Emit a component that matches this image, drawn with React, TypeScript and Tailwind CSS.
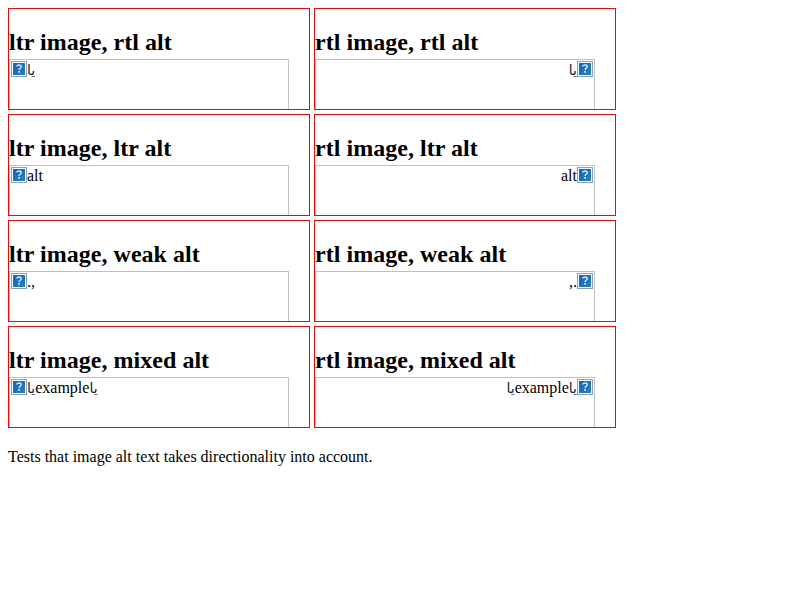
import React from "react";

type Dir = "ltr" | "rtl";

function BrokenIcon() {
  return (
    <svg width="16" height="16" viewBox="0 0 16 16" className="block shrink-0">
      <defs>
        <linearGradient id="blue" x1="0" y1="0" x2="1" y2="1">
          <stop offset="0" stopColor="#1a64a8" />
          <stop offset="1" stopColor="#2480c8" />
        </linearGradient>
      </defs>
      <rect x="0.5" y="0.5" width="15" height="15" fill="#fff" stroke="#7ba3d0" />
      <rect x="2" y="2" width="12" height="12" fill="url(#blue)" />
      <path d="M5.8 5.6C5.8 3.5 10.2 3.5 10.2 5.7C10.2 7.3 8.1 7.3 8.1 9" fill="none" stroke="#dcebf7" strokeWidth="1.4" />
      <rect x="7.2" y="10" width="1.8" height="1.7" fill="#dcebf7" />
    </svg>
  );
}

function AltText({ text }: { text: string }) {
  return (
    <span className="h-[18px] leading-[18px] whitespace-nowrap">
      {text.split(/([\u0600-\u06ff]+)/).map((part, i) =>
        /[\u0600-\u06ff]/.test(part) ? (
          <span key={i} className="text-sm leading-none text-[#222]">{part}</span>
        ) : (
          part
        ),
      )}
    </span>
  );
}

function Cell({ dir, kind, alt }: { dir: Dir; kind: string; alt: string }) {
  return (
    <div className="h-[102px] w-[302px] overflow-hidden border border-[#ff0000]">
      <h2 className="mt-5 h-[30px] text-2xl leading-[27px] font-bold tracking-[0.03px] whitespace-nowrap">
        {dir} image, {kind} alt
      </h2>
      <div dir={dir} className="flex h-[100px] w-[280px] border border-[#c0c0c0] p-px">
        <BrokenIcon />
        <AltText text={alt} />
      </div>
    </div>
  );
}

const rows = [
  { kind: "rtl", alt: "يا" },
  { kind: "ltr", alt: "alt" },
  { kind: "weak", alt: ".," },
  { kind: "mixed", alt: "ياexampleيا" },
];

export default function App() {
  return (
    <main className="p-2 font-['Liberation_Serif','DejaVu_Sans',serif] text-base leading-[18px] text-black">
      <div className="grid w-[608px] grid-cols-2 gap-1">
        {rows.map((r) => (
          <React.Fragment key={r.kind}>
            <Cell dir="ltr" kind={r.kind} alt={r.alt} />
            <Cell dir="rtl" kind={r.kind} alt={r.alt} />
          </React.Fragment>
        ))}
      </div>
      <p className="mt-5">Tests that image alt text takes directionality into account.</p>
    </main>
  );
}
